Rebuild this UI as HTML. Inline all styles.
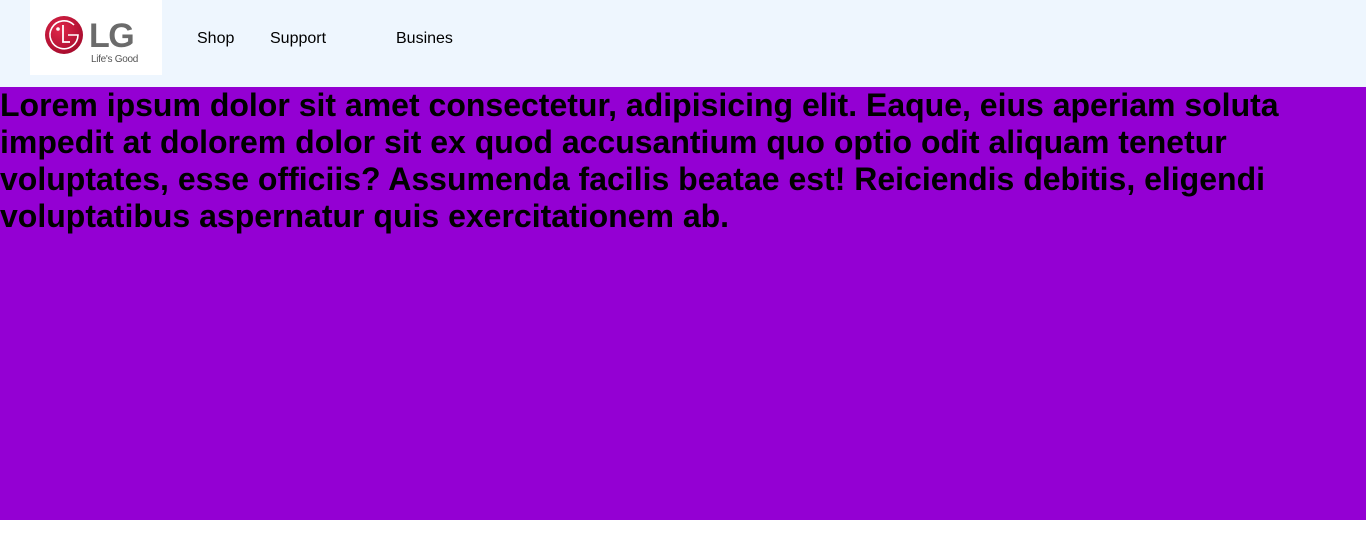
<!DOCTYPE html>
<html><head><meta charset="utf-8"><style>
html,body{margin:0;padding:0;width:1366px;height:550px;background:#fff;overflow:hidden}
.hdr{position:absolute;left:0;top:0;width:1366px;height:87px;background:#eef6fe}
.logo{position:absolute;left:30px;top:0;width:132px;height:75px;background:#fff}
.nav{position:absolute;top:30px;font:16px "Liberation Sans",Arial,sans-serif;color:#000}
.main{position:absolute;left:0;top:87px;width:1366px;height:433px;background:#9400d3}
.main p{margin:0;font:bold 32px/37px "Liberation Sans",Arial,sans-serif;color:#000}
</style></head><body>
<div class="hdr">
 <div class="logo">
  <svg width="132" height="75" viewBox="0 0 132 75">
   <defs><radialGradient id="g" cx="0.4" cy="0.35" r="0.7"><stop offset="0" stop-color="#e0284a"/><stop offset="1" stop-color="#a50a2c"/></radialGradient></defs>
   <circle cx="34" cy="35" r="19" fill="url(#g)"/>
   <path d="M44 25 A14 14 0 1 0 48 35 H38" fill="none" stroke="#fff" stroke-width="1.6"/>
   <circle cx="28" cy="29" r="1.8" fill="#fff"/>
   <path d="M33 25 V42 H40" fill="none" stroke="#fff" stroke-width="1.8"/>
   <text x="59" y="47" font-family="Liberation Sans,Arial,sans-serif" font-weight="bold" font-size="34" fill="#6b6b6b" letter-spacing="-1.5">LG</text>
   <text x="61" y="62" font-family="Liberation Sans,Arial,sans-serif" font-size="10" fill="#555" letter-spacing="-0.3">Life's Good</text>
  </svg>
 </div>
 <div class="nav" style="left:197px">Shop</div>
 <div class="nav" style="left:270px">Support</div>
 <div class="nav" style="left:396px">Busines</div>
</div>
<div class="main"><p>Lorem ipsum dolor sit amet consectetur, adipisicing elit. Eaque, eius aperiam soluta impedit at dolorem dolor sit ex quod accusantium quo optio odit aliquam tenetur voluptates, esse officiis? Assumenda facilis beatae est! Reiciendis debitis, eligendi voluptatibus aspernatur quis exercitationem ab.</p></div>
</body></html>
